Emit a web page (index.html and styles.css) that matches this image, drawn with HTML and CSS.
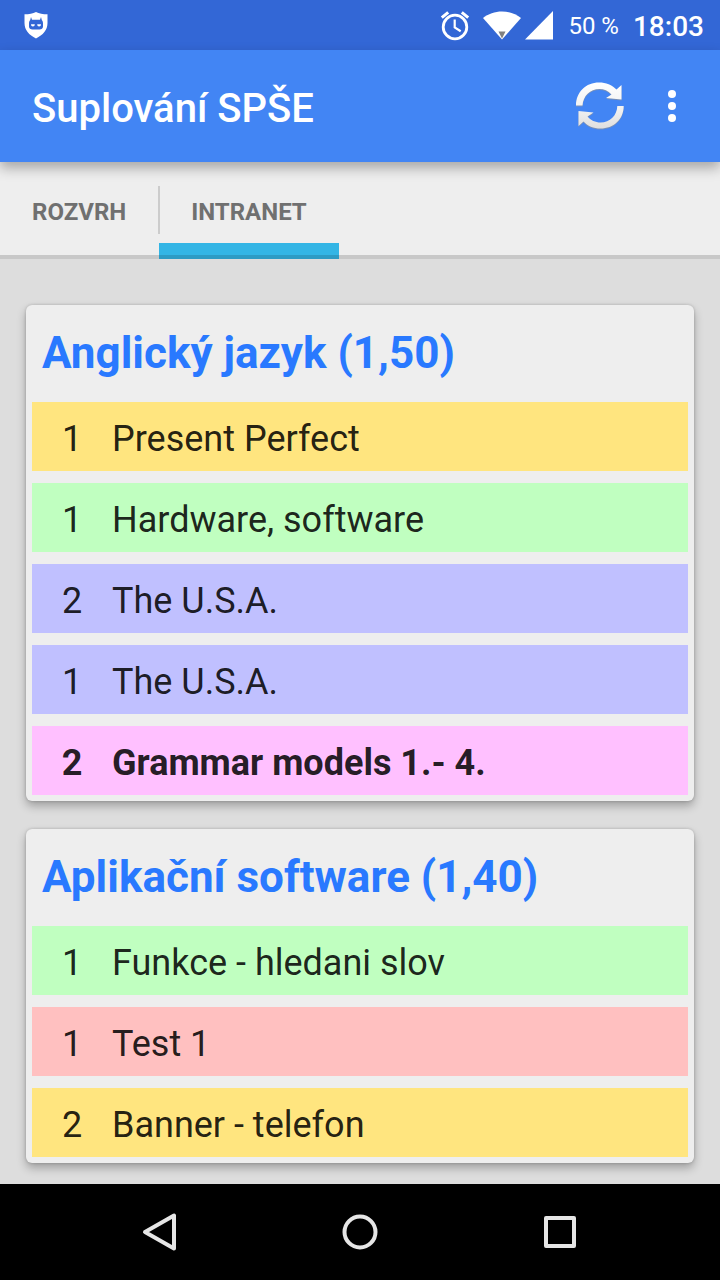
FILE: index.html
```html
<!DOCTYPE html>
<html lang="cs">
<head>
<meta charset="utf-8">
<meta name="viewport" content="width=device-width, initial-scale=1">
<title>Suplování SPŠE</title>
<link rel="stylesheet" href="styles.css">
</head>
<body>
<div class="status-bar">
  <svg class="shield" width="24" height="27" viewBox="0 0 24 27" aria-hidden="true">
    <path fill="#fff" d="M12 0c3 1.700 7 2.300 11.500 2.300V11c0 7-4.500 12-11.500 15.500C5 23 .5 18 .5 11V2.300C5 2.300 9 1.700 12 0z"/>
    <path fill="#3367d6" d="M7 5l1 2.700h8L17 5l.800 3C18.600 9 19 10 19 11.500v3c0 2-1.500 3-3.500 3h-7c-2 0-3.500-1-3.500-3v-3C5 10 5.400 9 6.200 8z"/>
    <path fill="#fff" d="M7 12.300h3.800c0 1.500-.8 2.200-1.900 2.200S7 13.700 7 12.300zM13.200 12.300H17c0 1.400-.8 2.200-1.900 2.200s-1.900-.7-1.900-2.200z"/>
  </svg>
  <div class="status-icons">
    <svg width="30" height="32" viewBox="0 0 30 32" fill="none" stroke="#fff" aria-hidden="true">
      <circle cx="15" cy="18" r="11.800" stroke-width="2.800"/>
      <path stroke-width="2.200" d="M14.700 10.500v8l6 3.800"/>
      <path stroke-width="3" d="M1.800 8.700l6.400-5.400M28.200 8.700l-6.400-5.400"/>
    </svg>
    <svg class="wifi" width="38" height="29" viewBox="0 0 38 29" aria-hidden="true">
      <path fill="#fff" d="M0 7C5 3 12 .5 19 .5S33 3 38 7L19 28.500z"/>
      <path fill="#808080" d="M15.500 20.500h7L19 27.500z"/>
    </svg>
    <svg width="28" height="29" viewBox="0 0 28 29" aria-hidden="true"><path fill="#fff" d="M28 0v28.500H0z"/></svg>
  </div>
  <span class="battery">50 %</span>
  <time class="clock">18:03</time>
</div>
<header class="app-bar">
  <h1 class="app-title">Suplování SPŠE</h1>
  <button class="icon-button refresh" type="button" aria-label="Obnovit">
    <svg width="50" height="48" viewBox="0 0 50 48" aria-hidden="true">
      <defs><linearGradient id="silver" x1="0" y1="0" x2="0" y2="48" gradientUnits="userSpaceOnUse"><stop offset="0" stop-color="#fff"/><stop offset=".6" stop-color="#f0f0f0"/><stop offset="1" stop-color="#ddd"/></linearGradient></defs>
      <g fill="#7890b8" transform="translate(0 1)"><path d="M1 23.500C1 10 11 .5 24 .5c7 0 13 2.500 17.500 7L46.500 3v14.500L31 16l5.500-3.500C33 8.500 29 7 24.500 7 15 7 8 14 7.500 23.500zM48.700 24C48.700 37.500 38.500 46.500 25.500 46.500 18.500 46.500 12.500 44 8.500 39.500l-5 4.500V29l15 1.500-6 4c3 3.800 8 6 13 6 9.500 0 16.500-7 16.800-16.500z"/></g>
      <path fill="url(#silver)" d="M1 23.500C1 10 11 .5 24 .5c7 0 13 2.500 17.500 7L46.500 3v14.500L31 16l5.500-3.500C33 8.500 29 7 24.500 7 15 7 8 14 7.500 23.500zM48.700 24C48.700 37.500 38.500 46.500 25.500 46.500 18.500 46.500 12.500 44 8.500 39.500l-5 4.500V29l15 1.500-6 4c3 3.800 8 6 13 6 9.500 0 16.500-7 16.800-16.500z"/>
    </svg>
  </button>
  <button class="icon-button more" type="button" aria-label="Další možnosti">
    <svg width="8" height="32" viewBox="0 0 8 32" fill="#fff" aria-hidden="true"><circle cx="4" cy="4" r="4"/><circle cx="4" cy="16" r="4"/><circle cx="4" cy="28" r="4"/></svg>
  </button>
</header>
<nav class="tabs">
  <a class="tab" href="#rozvrh">ROZVRH</a>
  <a class="tab tab-active" href="#intranet" aria-current="page">INTRANET</a>
</nav>
<main class="content">
  <section class="card">
    <h2 class="subject">Anglický jazyk (1,50)</h2>
    <ul class="grades">
      <li class="grade yellow"><span class="mark">1</span><span>Present Perfect</span></li>
      <li class="grade green"><span class="mark">1</span><span>Hardware, software</span></li>
      <li class="grade violet"><span class="mark">2</span><span>The U.S.A.</span></li>
      <li class="grade violet"><span class="mark">1</span><span>The U.S.A.</span></li>
      <li class="grade pink strong"><span class="mark">2</span><span>Grammar models 1.- 4.</span></li>
    </ul>
  </section>
  <section class="card">
    <h2 class="subject">Aplikační software (1,40)</h2>
    <ul class="grades">
      <li class="grade green"><span class="mark">1</span><span>Funkce - hledani slov</span></li>
      <li class="grade red"><span class="mark">1</span><span>Test 1</span></li>
      <li class="grade yellow"><span class="mark">2</span><span>Banner - telefon</span></li>
    </ul>
  </section>
</main>
<footer class="system-nav">
  <button class="nav-button" type="button" aria-label="Zpět"><svg width="40" height="40" viewBox="0 0 40 40" aria-hidden="true"><path d="M34 3.500v33L5 20z"/></svg></button>
  <button class="nav-button" type="button" aria-label="Domů"><svg width="40" height="40" viewBox="0 0 40 40" aria-hidden="true"><circle cx="20" cy="20" r="15.500"/></svg></button>
  <button class="nav-button" type="button" aria-label="Přehled"><svg width="40" height="40" viewBox="0 0 40 40" aria-hidden="true"><rect x="6" y="6" width="28" height="28"/></svg></button>
</footer>
</body>
</html>
```

FILE: styles.css
```css
* {
  box-sizing: border-box;
}

body {
  margin: 0;
  min-height: 100vh;
  display: flex;
  flex-direction: column;
  background: #ddd;
  font-family: Roboto, "Noto Sans", sans-serif;
}

button {
  padding: 0;
  border: 0;
  background: none;
}

svg {
  display: block;
}

.status-bar {
  display: flex;
  align-items: center;
  height: 50px;
  padding: 0 16px 0 24px;
  background: #3367d6;
  color: #fff;
}

.status-icons {
  display: flex;
  align-items: center;
  margin-left: auto;
}

.wifi {
  margin: 0 4px 0 13px;
}

.battery {
  margin-left: 15px;
  padding-top: 2px;
  font-size: 24px;
}

.clock {
  margin-left: 14px;
  padding-top: 2px;
  font-size: 28px;
  font-weight: 500;
}

.app-bar {
  position: relative;
  display: flex;
  align-items: center;
  height: 112px;
  padding: 0 32px;
  background: #4285f4;
  color: #fff;
  box-shadow: 0 6px 12px rgba(0, 0, 0, 0.3);
}

.app-title {
  flex: 1;
  margin: 0;
  padding-top: 6px;
  font-size: 40px;
  font-weight: 500;
  line-height: 48px;
}

.refresh {
  margin-right: 31px;
}

.more {
  padding: 0 12px;
}

.tabs {
  display: flex;
  gap: 1px;
  height: 97px;
  background: #eee;
  border-bottom: 4px solid #c8c8c8;
}

.tab {
  position: relative;
  display: flex;
  align-items: center;
  height: 97px;
  padding: 2px 32px 0;
  color: #707070;
  font-size: 24px;
  font-weight: 700;
  text-decoration: none;
}

/* Divider straddling the edge between two tabs */
.tab + .tab::before {
  content: "";
  position: absolute;
  top: 24px;
  left: -1px;
  width: 2px;
  height: 48px;
  background: #ccc;
}

.tab-active {
  background: linear-gradient(#33b5e5 12px, #2d9bc4 12px) 0 100% / 100% 16px no-repeat;
}

.content {
  flex: 1;
  display: flex;
  flex-direction: column;
  gap: 28px;
  padding: 46px 26px 21px;
}

.card {
  padding: 6px;
  border-radius: 6px;
  background: #eee;
  box-shadow: 0 5px 10px rgba(0, 0, 0, 0.28), 0 0 3px rgba(0, 0, 0, 0.2);
}

.subject {
  margin: 0;
  padding: 16px 10px 23px;
  color: #2979ff;
  font-size: 44px;
  font-weight: 700;
  line-height: 52px;
}

.grades {
  display: flex;
  flex-direction: column;
  gap: 12px;
  margin: 0;
  padding: 0;
  list-style: none;
}

.grade {
  display: flex;
  padding: 16px 0 11px;
  color: rgba(0, 0, 0, 0.87);
  font-size: 36px;
  line-height: 42px;
}

.mark {
  width: 80px;
  text-align: center;
}

.strong {
  font-weight: 700;
}

.yellow {
  background: #ffe57f;
}

.green {
  background: #c0ffc0;
}

.violet {
  background: #c0c0ff;
}

.pink {
  background: #ffc0ff;
}

.red {
  background: #ffc0c0;
}

.system-nav {
  position: relative;
  display: flex;
  justify-content: center;
  height: 96px;
  padding: 0 60px;
  background: #000;
}

.nav-button {
  display: grid;
  place-items: center;
  flex: 1;
}

.nav-button svg {
  fill: none;
  stroke: #e6e6e6;
  stroke-width: 4px;
  stroke-linejoin: round;
}
```
